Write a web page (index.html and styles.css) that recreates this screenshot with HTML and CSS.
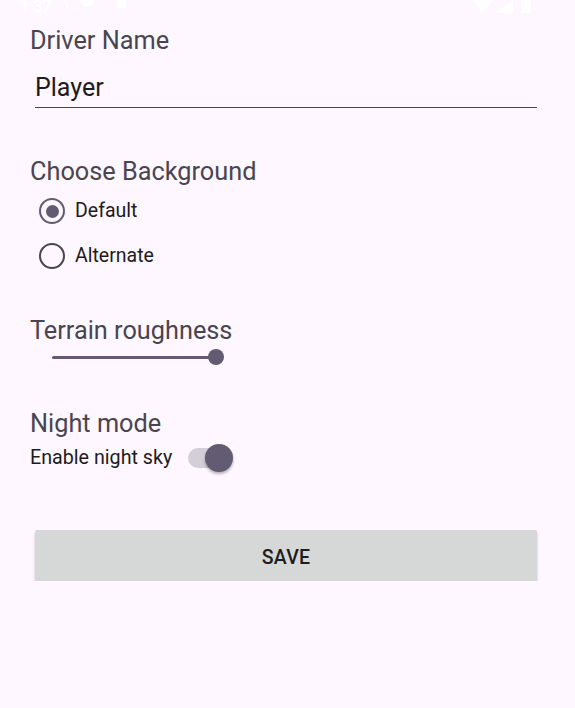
FILE: index.html
```html
<!DOCTYPE html>
<html>
<head>
<meta charset="utf-8">
<link rel="stylesheet" href="styles.css">
</head>
<body>
<div class="status">
  <span class="clock">1:37</span>
  <span class="sicons-left">
    <svg width="70" height="14" viewBox="0 0 70 14"><path d="M2 -2 L8 12" stroke="#fff" stroke-width="2" fill="none"/><circle cx="27" cy="4" r="7" fill="#fff"/><rect x="57" y="-2" width="9" height="14" fill="#fff"/></svg>
  </span>
  <span class="spacer"></span>
  <svg class="sicons-right" width="64" height="14" viewBox="0 0 64 14"><path d="M0 0 L20 0 L10 13 Z" fill="#fff"/><path d="M22 13 L40 0 L40 13 Z" fill="#fff"/><rect x="48" y="-2" width="10" height="15" rx="1" fill="#fff"/></svg>
</div>
<main class="content">
  <div class="title first">Driver Name</div>
  <div class="field"><span class="field-text">Player</span></div>

  <div class="title section">Choose Background</div>
  <div class="radios">
    <label class="radio-row"><span class="radio checked"></span><span class="radio-label">Default</span></label>
    <label class="radio-row"><span class="radio"></span><span class="radio-label">Alternate</span></label>
  </div>

  <div class="title section2">Terrain roughness</div>
  <div class="slider"><span class="track"></span><span class="thumb"></span></div>

  <div class="title section3">Night mode</div>
  <div class="switch-row">
    <span class="switch-label">Enable night sky</span>
    <span class="switch"><span class="switch-track"></span><span class="switch-thumb"></span></span>
  </div>

  <div class="button">SAVE</div>
</main>
</body>
</html>
```
FILE: styles.css
```css
html, body {
  margin: 0;
  padding: 0;
  background: #fef7ff;
  font-family: Roboto, "Noto Sans", sans-serif;
}
.status {
  height: 14px;
  display: flex;
  align-items: flex-end;
  padding: 0 38px 0 20px;
  overflow: hidden;
  color: #fff;
}
.clock {
  font-size: 16px;
  line-height: 14px;
  font-weight: 500;
  margin-right: 8px;
}
.spacer { flex: 1; }
.content {
  padding: 0 38px 0 30px;
  display: flex;
  flex-direction: column;
}
.title {
  font-size: 25.3px;
  line-height: 28px;
  color: #49454f;
  margin-top: 12px;
}
.title.first { margin-top: 13px; }
.field {
  margin: 19px 0 0 5px;
  border-bottom: 1.5px solid #49454f;
  padding-bottom: 5px;
}
.field-text {
  font-size: 25px;
  line-height: 28px;
  color: #1d1b20;
}
.section { margin-top: 50px; }
.radios {
  display: flex;
  flex-direction: column;
  gap: 17px;
  margin-top: 11px;
  padding-left: 9px;
}
.radio-row {
  display: flex;
  align-items: center;
  gap: 10px;
}
.radio {
  width: 26px;
  height: 26px;
  border: 2.6px solid #49454f;
  border-radius: 50%;
  box-sizing: border-box;
  display: flex;
  align-items: center;
  justify-content: center;
}
.radio.checked { border-color: #625b71; }
.radio.checked::after {
  content: "";
  width: 13px;
  height: 13px;
  border-radius: 50%;
  background: #625b71;
}
.radio-label {
  font-size: 19.5px;
  line-height: 28px;
  color: #1d1b20;
}
.section2 { margin-top: 47px; }
.slider {
  position: relative;
  margin: 3px 0 0 22px;
  width: 172px;
  height: 18px;
  display: flex;
  align-items: center;
}
.track {
  flex: 1;
  height: 3px;
  background: #625b71;
  border-radius: 2px;
  margin-right: 8px;
}
.thumb {
  position: absolute;
  right: 0;
  top: 1px;
  width: 16px;
  height: 16px;
  border-radius: 50%;
  background: #625b71;
}
.section3 { margin-top: 44px; }
.switch-row {
  display: flex;
  align-items: center;
  margin-top: 5px;
  gap: 16px;
}
.switch-label {
  font-size: 19.7px;
  line-height: 28px;
  color: #1d1b20;
}
.switch {
  position: relative;
  width: 46px;
  height: 30px;
  display: flex;
  align-items: center;
}
.switch-track {
  width: 40px;
  height: 20px;
  border-radius: 10px;
  background: #d3cfd9;
}
.switch-thumb {
  position: absolute;
  right: 1px;
  top: 1px;
  width: 28px;
  height: 28px;
  border-radius: 50%;
  background: #625b71;
  box-shadow: 0 2px 3px rgba(0,0,0,0.3);
}
.button {
  margin: 57px 0 0 5px;
  height: 51px;
  box-sizing: border-box;
  padding-top: 3px;
  background: #d6d7d7;
  border-radius: 2px;
  box-shadow: 0 2px 3px rgba(0,0,0,0.2);
  display: flex;
  align-items: center;
  justify-content: center;
  font-size: 19.5px;
  font-weight: 500;
  color: #1d1d1d;
  letter-spacing: 0.3px;
}
```
